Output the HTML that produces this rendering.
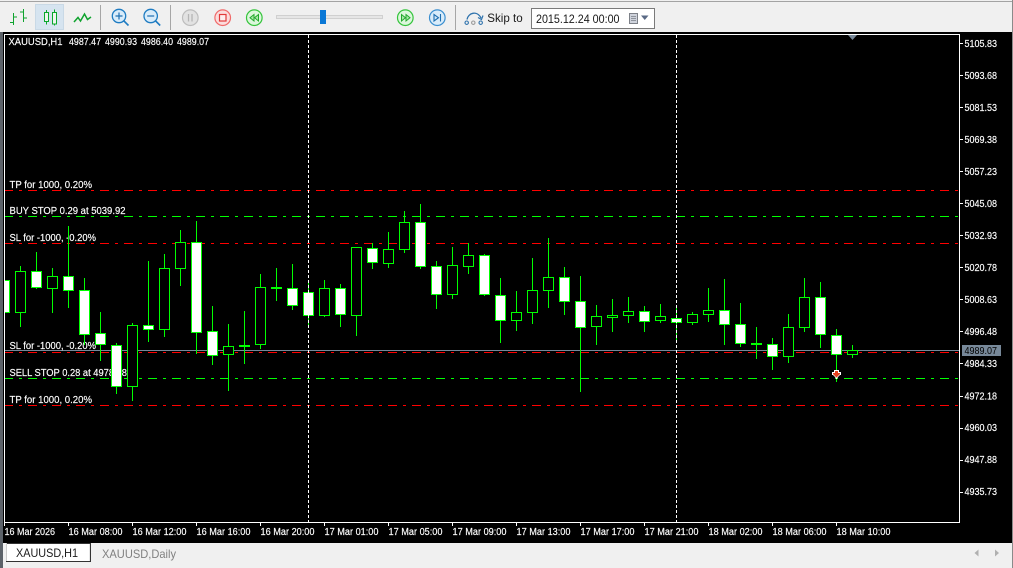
<!DOCTYPE html>
<html>
<head>
<meta charset="utf-8">
<title>XAUUSD,H1</title>
<style>
html,body{margin:0;padding:0;background:#f0f0f0;width:1013px;height:568px;overflow:hidden}
svg{display:block;position:absolute;left:0;top:0}
text{font-family:"Liberation Sans",sans-serif}
.c text{fill:#fff;font-size:9.8px;stroke:#fff;stroke-width:.15}
.ui{fill:#1a1a1a;font-size:12px}
</style>
</head>
<body>
<svg width="1013" height="568" viewBox="0 0 1013 568" xmlns="http://www.w3.org/2000/svg">
<rect width="1013" height="568" fill="#f0f0f0"/>
<rect y="1" width="1013" height="1" fill="#a3a3a3"/>
<rect x="0" y="32" width="3" height="536" fill="#5c6269"/>
<rect x="3" y="32" width="1009" height="511" fill="#000"/>
<rect x="1012" y="0" width="1" height="568" fill="#8a8a8a"/>

<!-- chart frame -->
<g shape-rendering="crispEdges">
<path d="M4.5 34.5H959.5V522.5H4.5Z" fill="none" stroke="#fff"/>
<path fill="none" stroke="#fff" d="M960 43.5h3M960 75.5h3M960 107.5h3M960 139.5h3M960 171.5h3M960 203.5h3M960 235.5h3M960 267.5h3M960 299.5h3M960 331.5h3M960 363.5h3M960 396.5h3M960 428.5h3M960 460.5h3M960 492.5h3"/>
<path fill="none" stroke="#fff" d="M4.5 523v3M68.5 523v3M132.5 523v3M196.5 523v3M260.5 523v3M324.5 523v3M388.5 523v3M452.5 523v3M516.5 523v3M580.5 523v3M644.5 523v3M708.5 523v3M772.5 523v3M836.5 523v3"/>
</g>

<!-- level lines -->
<g shape-rendering="crispEdges" fill="none" stroke-dasharray="9 6 3 6">
<path d="M5 190.5H959" stroke="#ff0000" stroke-dashoffset="-23"/>
<path d="M5 216.5H959" stroke="#00ff00" stroke-dashoffset="-23"/>
<path d="M5 243.5H959" stroke="#ff0000" stroke-dashoffset="-23"/>
<path d="M5 352.5H959" stroke="#ff0000" stroke-dashoffset="-23"/>
<path d="M5 378.5H959" stroke="#00ff00" stroke-dashoffset="-23"/>
<path d="M5 405.5H959" stroke="#ff0000" stroke-dashoffset="-23"/>
</g>
<rect x="5" y="350" width="954" height="1" fill="#778899" shape-rendering="crispEdges"/>

<!-- labels -->
<g class="c">
<text x="8.500" y="45" textLength="54" lengthAdjust="spacingAndGlyphs">XAUUSD,H1</text>
<text x="69" y="45" textLength="32" lengthAdjust="spacingAndGlyphs">4987.47</text>
<text x="105" y="45" textLength="32" lengthAdjust="spacingAndGlyphs">4990.93</text>
<text x="141" y="45" textLength="32" lengthAdjust="spacingAndGlyphs">4986.40</text>
<text x="177" y="45" textLength="32" lengthAdjust="spacingAndGlyphs">4989.07</text>
<text x="9.500" y="188" textLength="82.500" lengthAdjust="spacingAndGlyphs">TP for 1000, 0.20%</text>
<text x="9.500" y="214" textLength="116" lengthAdjust="spacingAndGlyphs">BUY STOP 0.29 at 5039.92</text>
<text x="9.500" y="241" textLength="86.500" lengthAdjust="spacingAndGlyphs">SL for -1000, -0.20%</text>
<text x="9.500" y="349" textLength="86.500" lengthAdjust="spacingAndGlyphs">SL for -1000, -0.20%</text>
<text x="9.500" y="376" textLength="117.500" lengthAdjust="spacingAndGlyphs">SELL STOP 0.28 at 4978.78</text>
<text x="9.500" y="403" textLength="82.500" lengthAdjust="spacingAndGlyphs">TP for 1000, 0.20%</text>
</g>

<!-- candles -->
<g shape-rendering="crispEdges" stroke="#00ff00" stroke-width="1">
<path fill="none" d="M20.5 266V327M36.5 252V289M52.5 268V313M68.5 226V308M84.5 278V345M100.5 312V361M116.5 343V394M132.5 323V401M148.5 261V342M164.5 254V337M180.5 230V286M196.5 221V354M212.5 306V365M228.5 324V391M244.5 311V364M260.5 274V349M276.5 268V301M292.5 264V310M308.5 280V326M324.5 280V317M340.5 284V327M356.5 247V336M372.5 243V269M388.5 232V268M404.5 211V253M420.5 204V269M436.5 261V309M452.5 247V299M468.5 243V274M484.5 254V296M500.5 278V343M516.5 291V331M532.5 258V324M548.5 238V308M564.5 267V315M580.5 276V392M596.5 305V345M612.5 299V332M628.5 297V323M644.5 306V332M660.5 304V323M676.5 308V340M692.5 312V325M708.5 288V322M724.5 279V345M740.5 303V347M756.5 327V359M772.5 338V370M788.5 314V363M804.5 278V332M820.5 282V348M836.5 329V382M852.5 345V358"/>
<path fill="#000" d="M15.5 271.5h10v41h-10zM47.5 276.5h10v12h-10zM127.5 325.5h10v61h-10zM159.5 268.5h10v61h-10zM175.5 242.5h10v26h-10zM223.5 346.5h10v8h-10zM255.5 287.5h10v57h-10zM319.5 288.5h10v27h-10zM351.5 247.5h10v68h-10zM383.5 249.5h10v14h-10zM399.5 222.5h10v27h-10zM447.5 265.5h10v29h-10zM463.5 255.5h10v11h-10zM511.5 312.5h10v8h-10zM527.5 290.5h10v22h-10zM543.5 277.5h10v13h-10zM591.5 316.5h10v10h-10zM607.5 315.5h10v2h-10zM623.5 311.5h10v4h-10zM655.5 316.5h10v4h-10zM687.5 314.5h10v8h-10zM703.5 310.5h10v4h-10zM783.5 327.5h10v29h-10zM799.5 297.5h10v30h-10zM847.5 350.5h10v4h-10z"/>
<path fill="#fff" d="M4.5 280.5h5v32h-5zM31.5 271.5h10v16h-10zM63.5 276.5h10v14h-10zM79.5 290.5h10v44h-10zM95.5 333.5h10v11h-10zM111.5 345.5h10v41h-10zM143.5 325.5h10v4h-10zM191.5 242.5h10v90h-10zM207.5 331.5h10v24h-10zM239.5 345.5h10v1h-10zM271.5 287.5h10v1h-10zM287.5 288.5h10v17h-10zM303.5 292.5h10v23h-10zM335.5 288.5h10v26h-10zM367.5 248.5h10v14h-10zM415.5 222.5h10v44h-10zM431.5 266.5h10v28h-10zM479.5 255.5h10v39h-10zM495.5 295.5h10v25h-10zM559.5 277.5h10v24h-10zM575.5 301.5h10v26h-10zM639.5 311.5h10v10h-10zM671.5 318.5h10v4h-10zM719.5 310.5h10v14h-10zM735.5 324.5h10v19h-10zM751.5 343.5h10v1h-10zM767.5 344.5h10v12h-10zM815.5 297.5h10v37h-10zM831.5 335.5h10v19h-10z"/>
</g>
<rect x="4" y="280" width="1" height="33" fill="#fff" shape-rendering="crispEdges"/>

<!-- vertical period separators -->
<g shape-rendering="crispEdges" fill="none" stroke="#fff" stroke-dasharray="3 2">
<path d="M308.5 35V522"/>
<path d="M676.5 35V522"/>
</g>

<!-- top marker -->
<path d="M848 35h9l-4.500 5z" fill="#778899"/>

<!-- sell arrow -->
<path d="M834 370H839V372H841V375H840L838 377L837 379H836L835 377L833 375H832V372H834Z" fill="#fff"/>
<path d="M835 371H838V373H840V374L836.500 377.500L833 374V373H835Z" fill="#e8401f"/>

<!-- price axis -->
<g class="c">
<text x="964.500" y="47" textLength="32.500" lengthAdjust="spacingAndGlyphs">5105.83</text>
<text x="964.500" y="79" textLength="32.500" lengthAdjust="spacingAndGlyphs">5093.68</text>
<text x="964.500" y="111" textLength="32.500" lengthAdjust="spacingAndGlyphs">5081.53</text>
<text x="964.500" y="143" textLength="32.500" lengthAdjust="spacingAndGlyphs">5069.38</text>
<text x="964.500" y="175" textLength="32.500" lengthAdjust="spacingAndGlyphs">5057.23</text>
<text x="964.500" y="207" textLength="32.500" lengthAdjust="spacingAndGlyphs">5045.08</text>
<text x="964.500" y="239" textLength="32.500" lengthAdjust="spacingAndGlyphs">5032.93</text>
<text x="964.500" y="271" textLength="32.500" lengthAdjust="spacingAndGlyphs">5020.78</text>
<text x="964.500" y="303" textLength="32.500" lengthAdjust="spacingAndGlyphs">5008.63</text>
<text x="964.500" y="335" textLength="32.500" lengthAdjust="spacingAndGlyphs">4996.48</text>
<text x="964.500" y="367" textLength="32.500" lengthAdjust="spacingAndGlyphs">4984.33</text>
<text x="964.500" y="399.500" textLength="32.500" lengthAdjust="spacingAndGlyphs">4972.18</text>
<text x="964.500" y="431" textLength="32.500" lengthAdjust="spacingAndGlyphs">4960.03</text>
<text x="964.500" y="463" textLength="32.500" lengthAdjust="spacingAndGlyphs">4947.88</text>
<text x="964.500" y="495" textLength="32.500" lengthAdjust="spacingAndGlyphs">4935.73</text>
</g>
<rect x="962" y="345" width="39" height="11" fill="#778899"/>
<text x="964.500" y="354" textLength="32.500" lengthAdjust="spacingAndGlyphs" fill="#000" font-size="9.800">4989.07</text>

<!-- time axis -->
<g class="c">
<text x="4.500" y="535" textLength="50.500" lengthAdjust="spacingAndGlyphs">16 Mar 2026</text>
<text x="68.500" y="535" textLength="54" lengthAdjust="spacingAndGlyphs">16 Mar 08:00</text>
<text x="132.500" y="535" textLength="54" lengthAdjust="spacingAndGlyphs">16 Mar 12:00</text>
<text x="196.500" y="535" textLength="54" lengthAdjust="spacingAndGlyphs">16 Mar 16:00</text>
<text x="260.500" y="535" textLength="54" lengthAdjust="spacingAndGlyphs">16 Mar 20:00</text>
<text x="324.500" y="535" textLength="54" lengthAdjust="spacingAndGlyphs">17 Mar 01:00</text>
<text x="388.500" y="535" textLength="54" lengthAdjust="spacingAndGlyphs">17 Mar 05:00</text>
<text x="452.500" y="535" textLength="54" lengthAdjust="spacingAndGlyphs">17 Mar 09:00</text>
<text x="516.500" y="535" textLength="54" lengthAdjust="spacingAndGlyphs">17 Mar 13:00</text>
<text x="580.500" y="535" textLength="54" lengthAdjust="spacingAndGlyphs">17 Mar 17:00</text>
<text x="644.500" y="535" textLength="54" lengthAdjust="spacingAndGlyphs">17 Mar 21:00</text>
<text x="708.500" y="535" textLength="54" lengthAdjust="spacingAndGlyphs">18 Mar 02:00</text>
<text x="772.500" y="535" textLength="54" lengthAdjust="spacingAndGlyphs">18 Mar 06:00</text>
<text x="836.500" y="535" textLength="54" lengthAdjust="spacingAndGlyphs">18 Mar 10:00</text>
</g>

<!-- tabs -->
<rect x="6.500" y="543.500" width="83" height="18" fill="#fff" stroke="#e8e8e8" shape-rendering="crispEdges"/>
<path d="M6 543.500H90.500V561.500H6" fill="none" stroke="#333" shape-rendering="crispEdges"/>
<path d="M6.500 543V561" stroke="#ccc" shape-rendering="crispEdges"/>
<text x="16" y="557" font-size="12" fill="#1a1a1a" textLength="62" lengthAdjust="spacingAndGlyphs">XAUUSD,H1</text>
<text x="102" y="558" font-size="12" fill="#808080" textLength="74" lengthAdjust="spacingAndGlyphs">XAUUSD,Daily</text>
<path d="M978.500 549.500v7l-4-3.500z" fill="#b0b0b0"/>
<path d="M995 549.500v7l4-3.500z" fill="#b0b0b0"/>

<!-- toolbar -->
<g shape-rendering="crispEdges">
<rect x="35.500" y="4.500" width="28" height="25" fill="#d6e4f0" stroke="#c9d9e6"/>
<rect x="100" y="5" width="1" height="25" fill="#a6a6a6"/>
<rect x="170" y="5" width="1" height="25" fill="#a6a6a6"/>
<rect x="455" y="5" width="1" height="25" fill="#a6a6a6"/>
</g>
<!-- bar chart icon -->
<path d="M13.500 13V25M10 22.500H13.500M13.500 17H17M23.500 9V22M20 12H23.500M23.500 18H27" fill="none" stroke="#0fa32e" stroke-width="1.200" shape-rendering="crispEdges"/>
<!-- candle icon -->
<g fill="none" stroke="#09a82c" stroke-width="1.200" shape-rendering="crispEdges">
<path d="M46.500 10V12M46.500 21.500V24.500M54.500 9.500V12M54.500 24V25.500"/>
<rect x="44.500" y="12.500" width="4" height="9" fill="#eef6ee"/>
<rect x="52.500" y="12.500" width="4" height="11.500" fill="#eef6ee"/>
</g>
<!-- line icon -->
<path d="M74 22L78 17.500L80.500 21L84.500 14L87.500 19.500L91 17" fill="none" stroke="#0fa32e" stroke-width="1.500"/>
<!-- zoom in -->
<circle cx="119" cy="16" r="6.700" fill="#d9ecfa" stroke="#1f7cc2" stroke-width="1.300"/>
<path d="M124 21L128.500 25.500" stroke="#1f7cc2" stroke-width="1.600" fill="none"/>
<path d="M115.500 16H122.500M119 12.500V19.500" stroke="#1f6fb0" stroke-width="1.200" fill="none"/>
<!-- zoom out -->
<circle cx="150.700" cy="16" r="6.700" fill="#d9ecfa" stroke="#1f7cc2" stroke-width="1.300"/>
<path d="M155.700 21L160.200 25.500" stroke="#1f7cc2" stroke-width="1.600" fill="none"/>
<path d="M147.200 16H154.200" stroke="#1f6fb0" stroke-width="1.200" fill="none"/>
<!-- pause -->
<circle cx="190.300" cy="17.700" r="7.800" fill="#e2e2e2" stroke="#bdbdbd" stroke-width="1.200"/>
<path d="M188.500 14V21.500M192 14V21.500" stroke="#b5b5b5" stroke-width="1.300" fill="none"/>
<!-- stop -->
<circle cx="222.700" cy="17.700" r="7.800" fill="#fbdcdc" stroke="#f06a6a" stroke-width="1.200"/>
<rect x="219.500" y="14.500" width="6.500" height="6.500" fill="#fdeeee" stroke="#e23a3a" stroke-width="1.200"/>
<!-- rewind -->
<circle cx="254.300" cy="17.700" r="7.800" fill="#dcf7dc" stroke="#35c43c" stroke-width="1.200"/>
<path d="M254 14.500V21L250 17.700ZM258.500 14.500V21L254.500 17.700Z" fill="#a8e8a8" stroke="#22a82c" stroke-width="1"/>
<!-- slider -->
<rect x="276.500" y="15.500" width="106" height="3" fill="#e6e6e6" stroke="#d0d0d0" shape-rendering="crispEdges"/>
<rect x="320" y="10" width="6" height="14" fill="#0a78d6" shape-rendering="crispEdges"/>
<!-- fast forward -->
<circle cx="405.300" cy="17.700" r="7.800" fill="#dcf7dc" stroke="#35c43c" stroke-width="1.200"/>
<path d="M401.500 14.500V21L405.500 17.700ZM406 14.500V21L410 17.700Z" fill="#a8e8a8" stroke="#22a82c" stroke-width="1"/>
<!-- to end -->
<circle cx="437.300" cy="17.700" r="7.800" fill="#d9ecfa" stroke="#3b8fd0" stroke-width="1.200"/>
<path d="M434 14.500V21L438.500 17.700ZM440.500 14V21.500" fill="#cfe6f8" stroke="#1f6fb0" stroke-width="1.100"/>
<!-- skip icon -->
<path d="M467 19.500C468 13 477 10 481 18" fill="none" stroke="#2f73ad" stroke-width="1.300"/>
<path d="M478 17.500L481.500 19.500L483 15.500" fill="none" stroke="#2f73ad" stroke-width="1.200"/>
<circle cx="466.700" cy="22.700" r="1.700" fill="none" stroke="#2f73ad" stroke-width="1.100"/>
<circle cx="473.300" cy="22.700" r="1.700" fill="none" stroke="#9a9a9a" stroke-width="1.100"/>
<circle cx="480.700" cy="22.700" r="1.700" fill="none" stroke="#2f73ad" stroke-width="1.100"/>
<text class="ui" x="487.300" y="22" textLength="35.400" lengthAdjust="spacingAndGlyphs">Skip to</text>
<!-- date box -->
<rect x="531.500" y="8.500" width="123" height="20" fill="#fff" stroke="#7a7a7a" shape-rendering="crispEdges"/>
<text class="ui" x="536" y="23" textLength="83.500" lengthAdjust="spacingAndGlyphs">2015.12.24 00:00</text>
<g shape-rendering="crispEdges">
<rect x="629.500" y="13.500" width="8" height="10" fill="#cfd3dc" stroke="#7d8188"/>
<path d="M631 16.500h5M631 18.500h5M631 20.500h5" stroke="#8f949d" fill="none"/>
</g>
<path d="M641 15.500H648.500L644.750 20Z" fill="#5a6a85"/>
</svg>
</body>
</html>
